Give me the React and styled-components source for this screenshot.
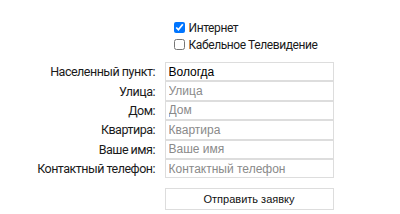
import React from 'react'
import styled, { createGlobalStyle } from 'styled-components'

const Global = createGlobalStyle`
  body {
    margin: 0;
    background: #fff;
    font-family: Roboto, "Liberation Sans", Arial, sans-serif;
  }
`

export default function App() {
  const fields = [
    { label: 'Населенный пункт:', placeholder: 'Населенный пункт', value: 'Вологда' },
    { label: 'Улица:', placeholder: 'Улица' },
    { label: 'Дом:', placeholder: 'Дом' },
    { label: 'Квартира:', placeholder: 'Квартира' },
    { label: 'Ваше имя:', placeholder: 'Ваше имя' },
    { label: 'Контактный телефон:', placeholder: 'Контактный телефон' },
  ]
  return (
    <>
      <Global />
      <Form>
        <Empty />
        <Checks>
          <CheckRow>
            <input type="checkbox" defaultChecked />
            <span>Интернет</span>
          </CheckRow>
          <CheckRow>
            <input type="checkbox" />
            <span>Кабельное Телевидение</span>
          </CheckRow>
        </Checks>
        {fields.map((f) => (
          <React.Fragment key={f.label}>
            <Label>{f.label}</Label>
            <Field placeholder={f.placeholder} defaultValue={f.value} />
          </React.Fragment>
        ))}
        <Empty />
        <Submit type="button">Отправить заявку</Submit>
      </Form>
    </>
  )
}

const Form = styled.form`
  display: grid;
  grid-template-columns: 155px 169px;
  column-gap: 9.5px;
  padding-top: 19px;
  align-items: center;
`

const Empty = styled.div``

const Checks = styled.div`
  display: flex;
  flex-direction: column;
  padding-left: 5px;
  margin-bottom: 9px;
  white-space: nowrap;
`

const CheckRow = styled.label`
  display: flex;
  align-items: center;
  height: 17px;
  font-size: 12px;
  letter-spacing: -0.4px;
  color: #1a1a1a;
  input {
    margin: 0 4px;
    width: 11px;
    height: 11px;
  }
`

const Label = styled.div`
  text-align: right;
  font-size: 12.5px;
  letter-spacing: -0.5px;
  color: #1a1a1a;
  white-space: nowrap;
`

const Field = styled.input`
  box-sizing: border-box;
  height: 19.4px;
  width: 169px;
  margin: 0;
  border: 1px solid #ddd;
  padding: 0 3px;
  font-family: Arial, "Liberation Sans", sans-serif;
  font-size: 12px;
  color: #000;
  background: #fff;
  outline: none;
  &::placeholder {
    color: #8a8a8a;
  }
`

const Submit = styled.button`
  box-sizing: border-box;
  margin-top: 10px;
  height: 21.4px;
  width: 169px;
  border: 1px solid #ddd;
  background: #fff;
  font-family: Arial, "Liberation Sans", sans-serif;
  font-size: 11px;
  color: #111;
  padding: 0;
`
